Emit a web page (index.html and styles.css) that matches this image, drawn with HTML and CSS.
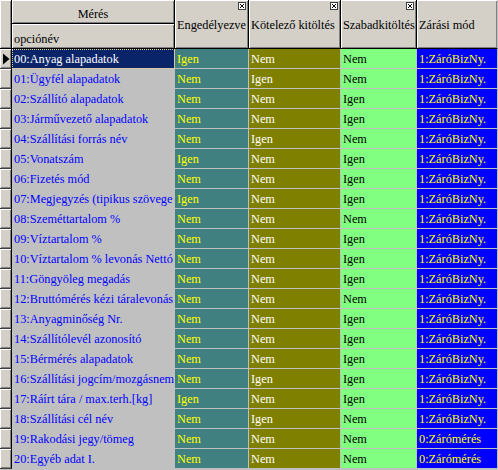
FILE: index.html
```html
<!DOCTYPE html>
<html>
<head>
<meta charset="utf-8">
<link rel="stylesheet" href="styles.css">
</head>
<body>
<div class="grid">
  <div class="head">
    <div class="h-ind"></div>
    <div class="h-cell h-title">Mérés</div>
    <div class="h-cell h-col">Engedélyezve<svg class="x-icon" width="8" height="8" viewBox="0 0 8 8"><rect x="0.5" y="0.5" width="7" height="7" fill="#fff" stroke="#404040"/><path d="M2 2 L6 6 M6 2 L2 6" stroke="#000" stroke-width="1"/></svg></div>
    <div class="h-cell h-col">Kötelező kitöltés<svg class="x-icon" width="8" height="8" viewBox="0 0 8 8"><rect x="0.5" y="0.5" width="7" height="7" fill="#fff" stroke="#404040"/><path d="M2 2 L6 6 M6 2 L2 6" stroke="#000" stroke-width="1"/></svg></div>
    <div class="h-cell h-col">Szabadkitöltés<svg class="x-icon" width="8" height="8" viewBox="0 0 8 8"><rect x="0.5" y="0.5" width="7" height="7" fill="#fff" stroke="#404040"/><path d="M2 2 L6 6 M6 2 L2 6" stroke="#000" stroke-width="1"/></svg></div>
    <div class="h-cell h-col h-last">Zárási mód</div>
    <div class="h-cell h-sub">opciónév</div>
  </div>

  <div class="row">
    <div class="ind"><svg width="8" height="12" viewBox="0 0 8 12"><polygon points="1,0.5 7.5,6 1,11.5" fill="#000"/></svg></div>
    <div class="c name sel">00:Anyag alapadatok</div>
    <div class="c en">Igen</div><div class="c ko">Nem</div><div class="c sz">Nem</div><div class="c za">1:ZáróBizNy.</div>
  </div>
  <div class="row"><div class="ind"></div><div class="c name">01:Ügyfél alapadatok</div><div class="c en">Nem</div><div class="c ko">Igen</div><div class="c sz">Nem</div><div class="c za">1:ZáróBizNy.</div></div>
  <div class="row"><div class="ind"></div><div class="c name">02:Szállító alapadatok</div><div class="c en">Nem</div><div class="c ko">Nem</div><div class="c sz">Igen</div><div class="c za">1:ZáróBizNy.</div></div>
  <div class="row"><div class="ind"></div><div class="c name">03:Járművezető alapadatok</div><div class="c en">Nem</div><div class="c ko">Nem</div><div class="c sz">Igen</div><div class="c za">1:ZáróBizNy.</div></div>
  <div class="row"><div class="ind"></div><div class="c name">04:Szállítási forrás név</div><div class="c en">Nem</div><div class="c ko">Igen</div><div class="c sz">Nem</div><div class="c za">1:ZáróBizNy.</div></div>
  <div class="row"><div class="ind"></div><div class="c name">05:Vonatszám</div><div class="c en">Igen</div><div class="c ko">Nem</div><div class="c sz">Igen</div><div class="c za">1:ZáróBizNy.</div></div>
  <div class="row"><div class="ind"></div><div class="c name">06:Fizetés mód</div><div class="c en">Nem</div><div class="c ko">Nem</div><div class="c sz">Igen</div><div class="c za">1:ZáróBizNy.</div></div>
  <div class="row"><div class="ind"></div><div class="c name">07:Megjegyzés (tipikus szövege</div><div class="c en">Igen</div><div class="c ko">Nem</div><div class="c sz">Igen</div><div class="c za">1:ZáróBizNy.</div></div>
  <div class="row"><div class="ind"></div><div class="c name">08:Szeméttartalom %</div><div class="c en">Nem</div><div class="c ko">Nem</div><div class="c sz">Nem</div><div class="c za">1:ZáróBizNy.</div></div>
  <div class="row"><div class="ind"></div><div class="c name">09:Víztartalom %</div><div class="c en">Nem</div><div class="c ko">Nem</div><div class="c sz">Igen</div><div class="c za">1:ZáróBizNy.</div></div>
  <div class="row"><div class="ind"></div><div class="c name">10:Víztartalom % levonás Nettó</div><div class="c en">Nem</div><div class="c ko">Nem</div><div class="c sz">Igen</div><div class="c za">1:ZáróBizNy.</div></div>
  <div class="row"><div class="ind"></div><div class="c name">11:Göngyöleg megadás</div><div class="c en">Nem</div><div class="c ko">Nem</div><div class="c sz">Igen</div><div class="c za">1:ZáróBizNy.</div></div>
  <div class="row"><div class="ind"></div><div class="c name">12:Bruttómérés kézi táralevonás</div><div class="c en">Nem</div><div class="c ko">Nem</div><div class="c sz">Nem</div><div class="c za">1:ZáróBizNy.</div></div>
  <div class="row"><div class="ind"></div><div class="c name">13:Anyagminőség Nr.</div><div class="c en">Nem</div><div class="c ko">Nem</div><div class="c sz">Igen</div><div class="c za">1:ZáróBizNy.</div></div>
  <div class="row"><div class="ind"></div><div class="c name">14:Szállítólevél azonosító</div><div class="c en">Nem</div><div class="c ko">Nem</div><div class="c sz">Igen</div><div class="c za">1:ZáróBizNy.</div></div>
  <div class="row"><div class="ind"></div><div class="c name">15:Bérmérés alapadatok</div><div class="c en">Nem</div><div class="c ko">Nem</div><div class="c sz">Igen</div><div class="c za">1:ZáróBizNy.</div></div>
  <div class="row"><div class="ind"></div><div class="c name">16:Szállítási jogcím/mozgásnem</div><div class="c en">Nem</div><div class="c ko">Igen</div><div class="c sz">Igen</div><div class="c za">1:ZáróBizNy.</div></div>
  <div class="row"><div class="ind"></div><div class="c name">17:Ráírt tára / max.terh.[kg]</div><div class="c en">Igen</div><div class="c ko">Nem</div><div class="c sz">Igen</div><div class="c za">1:ZáróBizNy.</div></div>
  <div class="row"><div class="ind"></div><div class="c name">18:Szállítási cél név</div><div class="c en">Nem</div><div class="c ko">Igen</div><div class="c sz">Nem</div><div class="c za">1:ZáróBizNy.</div></div>
  <div class="row"><div class="ind"></div><div class="c name">19:Rakodási jegy/tömeg</div><div class="c en">Nem</div><div class="c ko">Nem</div><div class="c sz">Nem</div><div class="c za">0:Zárómérés</div></div>
  <div class="row"><div class="ind"></div><div class="c name">20:Egyéb adat I.</div><div class="c en">Nem</div><div class="c ko">Nem</div><div class="c sz">Nem</div><div class="c za">0:Zárómérés</div></div>
</div>
</body>
</html>
```
FILE: styles.css
```css
html, body {
  margin: 0;
  padding: 0;
  background: #c0c0c0;
}
body {
  font-family: "Liberation Serif", "Times New Roman", serif;
  font-size: 12.3px;
  width: 498px;
  height: 470px;
  overflow: hidden;
}
.grid {
  display: flex;
  flex-direction: column;
}
.head {
  display: grid;
  grid-template-columns: 12px 163px 74px 92px 76px 81px;
  grid-template-rows: 24px 25px;
  background: #d4d0c8;
}
.h-ind {
  grid-row: 1 / 3;
  grid-column: 1;
  border-right: 1px solid #000;
  border-bottom: 1px solid #000;
  box-shadow: inset 1px 1px #fff, inset -1px -1px #808080;
}
.h-cell {
  box-sizing: border-box;
  border-right: 1px solid #000;
  border-bottom: 1px solid #000;
  box-shadow: inset 1px 1px #fff, inset -1px -1px #808080;
  color: #000;
  display: flex;
  align-items: center;
  white-space: nowrap;
  overflow: hidden;
  padding-top: 3px;
}
.h-title {
  grid-column: 2;
  grid-row: 1;
  justify-content: center;
  padding-top: 6px;
}
.h-sub {
  grid-column: 2;
  grid-row: 2;
  padding-left: 2px;
  padding-top: 7px;
}
.h-col {
  grid-row: 1 / 3;
  padding-left: 2px;
  position: relative;
}
.h-last {
  border-right: 1px solid #c0c0c0;
}
.x-icon {
  position: absolute;
  top: 2px;
  right: 2px;
}
.row {
  display: grid;
  grid-template-columns: 12px 163px 74px 92px 76px 81px;
  height: 20px;
}
.ind {
  box-sizing: border-box;
  background: #d4d0c8;
  border-right: 1px solid #000;
  border-bottom: 1px solid #404040;
  box-shadow: inset 1px 1px #fff, inset -1px -1px #808080;
  display: flex;
  align-items: center;
  padding-left: 2px;
}
.c {
  box-sizing: border-box;
  border-right: 1px solid #c0c0c0;
  border-bottom: 1px solid #c0c0c0;
  line-height: 19px;
  padding-left: 2px;
  padding-top: 1px;
  white-space: nowrap;
  overflow: hidden;
}
.name {
  background: #c0c0c0;
  color: #0000ff;
}
.name.sel {
  background: #0a246a;
  color: #fff;
  outline: 1px dotted #e8d088;
  outline-offset: -1px;
}
.en {
  background: #408080;
  color: #ffff00;
}
.ko {
  background: #808000;
  color: #fff;
}
.sz {
  background: #80ff80;
  color: #000;
}
.za {
  background: #0000ff;
  color: #ffff00;
}
```
